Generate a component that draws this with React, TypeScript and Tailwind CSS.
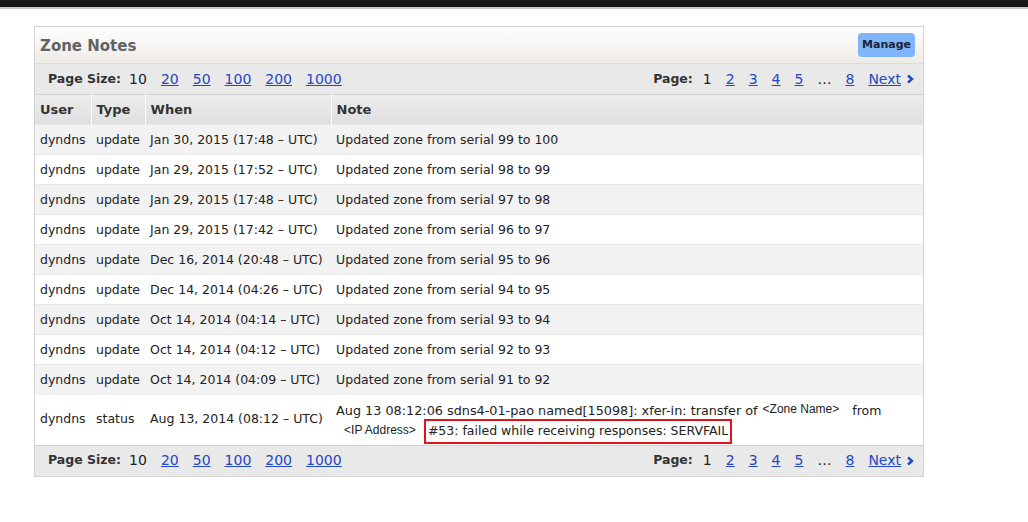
import React from "react";

const rows = [
  ["dyndns", "update", "Jan 30, 2015 (17:48 – UTC)", "Updated zone from serial 99 to 100"],
  ["dyndns", "update", "Jan 29, 2015 (17:52 – UTC)", "Updated zone from serial 98 to 99"],
  ["dyndns", "update", "Jan 29, 2015 (17:48 – UTC)", "Updated zone from serial 97 to 98"],
  ["dyndns", "update", "Jan 29, 2015 (17:42 – UTC)", "Updated zone from serial 96 to 97"],
  ["dyndns", "update", "Dec 16, 2014 (20:48 – UTC)", "Updated zone from serial 95 to 96"],
  ["dyndns", "update", "Dec 14, 2014 (04:26 – UTC)", "Updated zone from serial 94 to 95"],
  ["dyndns", "update", "Oct 14, 2014 (04:14 – UTC)", "Updated zone from serial 93 to 94"],
  ["dyndns", "update", "Oct 14, 2014 (04:12 – UTC)", "Updated zone from serial 92 to 93"],
  ["dyndns", "update", "Oct 14, 2014 (04:09 – UTC)", "Updated zone from serial 91 to 92"],
];

function Pager({ top }: { top?: boolean }) {
  return (
    <div
      className={`flex items-center justify-between h-[31px] pl-[13px] pr-[9px] bg-[#e9e9e9] text-[14px] ${
        top ? "border-t border-[#dcdcdc]" : "border-t border-[#d2d2d2]"
      }`}
    >
      <div className="flex items-center">
        <span className="font-bold text-[#333] text-[12.5px] mr-[8px]">Page Size:</span>
        <span className="text-[#222] mr-[14px]">10</span>
        {["20", "50", "100", "200", "1000"].map((n) => (
          <a key={n} href="#" className="text-[#2447c4] underline mr-[14px]">
            {n}
          </a>
        ))}
      </div>
      <div className="flex items-center">
        <span className="font-bold text-[#333] text-[12.5px] mr-[10px]">Page:</span>
        <span className="text-[#222] mr-[14px]">1</span>
        {["2", "3", "4", "5"].map((n) => (
          <a key={n} href="#" className="text-[#2447c4] underline mr-[14px]">
            {n}
          </a>
        ))}
        <span className="text-[#222] mr-[14px]">…</span>
        <a href="#" className="text-[#2447c4] underline mr-[14px]">8</a>
        <a href="#" className="text-[#2447c4] underline">Next</a>
        <svg width="8" height="10" viewBox="0 0 8 10" className="ml-[5px]">
          <path d="M2 1.5 L6 5 L2 8.5" stroke="#2447c4" strokeWidth="2.4" fill="none" />
        </svg>
      </div>
    </div>
  );
}

export default function App() {
  return (
    <div className="w-[1028px] h-[522px] bg-white text-[12.5px] font-['DejaVu_Sans',sans-serif] text-[#222]">
      <div className="h-[7px] bg-[#181818]" />
      <div className="h-[2px] bg-[#c9c9c9]" />
      <div className="pt-[17px] pl-[34px]">
        <div className="w-[890px] border border-[#d3d3d3]">
          {/* header */}
          <div className="h-[36px] flex items-center justify-between pl-[5px] pr-[8px] bg-gradient-to-b from-white to-[#eeebe6]">
            <span className="text-[15px] font-bold text-[#626262] relative top-[1px]">Zone Notes</span>
            <button className="h-[24px] px-[4px] rounded-[4px] bg-[#80b5fb] text-[11px] font-bold text-[#1b2433]">
              Manage
            </button>
          </div>
          <Pager top />
          <table className="w-full border-collapse border-t border-[#d2d2d2]">
            <colgroup>
              <col className="w-[56px]" />
              <col className="w-[54px]" />
              <col className="w-[186px]" />
              <col />
            </colgroup>
            <thead>
              <tr className="h-[30px] bg-gradient-to-b from-[#ececec] to-[#dfdfdf] text-left">
                {["User", "Type", "When", "Note"].map((h, i) => (
                  <th
                    key={h}
                    className={`px-[5px] font-bold text-[13px] text-[#333] ${i < 3 ? "border-r border-white" : ""}`}
                  >
                    {h}
                  </th>
                ))}
              </tr>
            </thead>
            <tbody>
              {rows.map((r, i) => (
                <tr key={i} className={`h-[30px] ${i % 2 === 0 ? "bg-[#f2f2f2]" : "bg-white"} border-t border-[#e8e8e8]`}>
                  {r.map((c, j) => (
                    <td key={j} className="px-[5px] whitespace-nowrap pt-[1px]">
                      {c}
                    </td>
                  ))}
                </tr>
              ))}
              <tr className="h-[50px] bg-white">
                <td className="px-[5px]">dyndns</td>
                <td className="px-[5px]">status</td>
                <td className="px-[5px] whitespace-nowrap">Aug 13, 2014 (08:12 – UTC)</td>
                <td className="px-[5px] align-top pt-[6px]">
                  <div className="flex items-baseline whitespace-nowrap">
                    <span className="text-[12.8px]">Aug 13 08:12:06 sdns4-01-pao named[15098]: xfer-in: transfer of</span>
                    <span className="ml-[5px] text-[12px] font-['Liberation_Sans',sans-serif] relative -top-[2px]">
                      &lt;Zone Name&gt;
                    </span>
                    <span className="ml-[13px]">from</span>
                  </div>
                  <div className="flex items-center whitespace-nowrap -mt-[1px]">
                    <span className="ml-[8px] text-[12px] font-['Liberation_Sans',sans-serif] relative -top-[2px]">
                      &lt;IP Address&gt;
                    </span>
                    <span className="ml-[8px] border-2 border-[#e3131b] pl-[2px] h-[25px] flex items-center pr-[2px]">
                      #53: failed while receiving responses: SERVFAIL
                    </span>
                  </div>
                </td>
              </tr>
            </tbody>
          </table>
          <Pager />
        </div>
      </div>
    </div>
  );
}
